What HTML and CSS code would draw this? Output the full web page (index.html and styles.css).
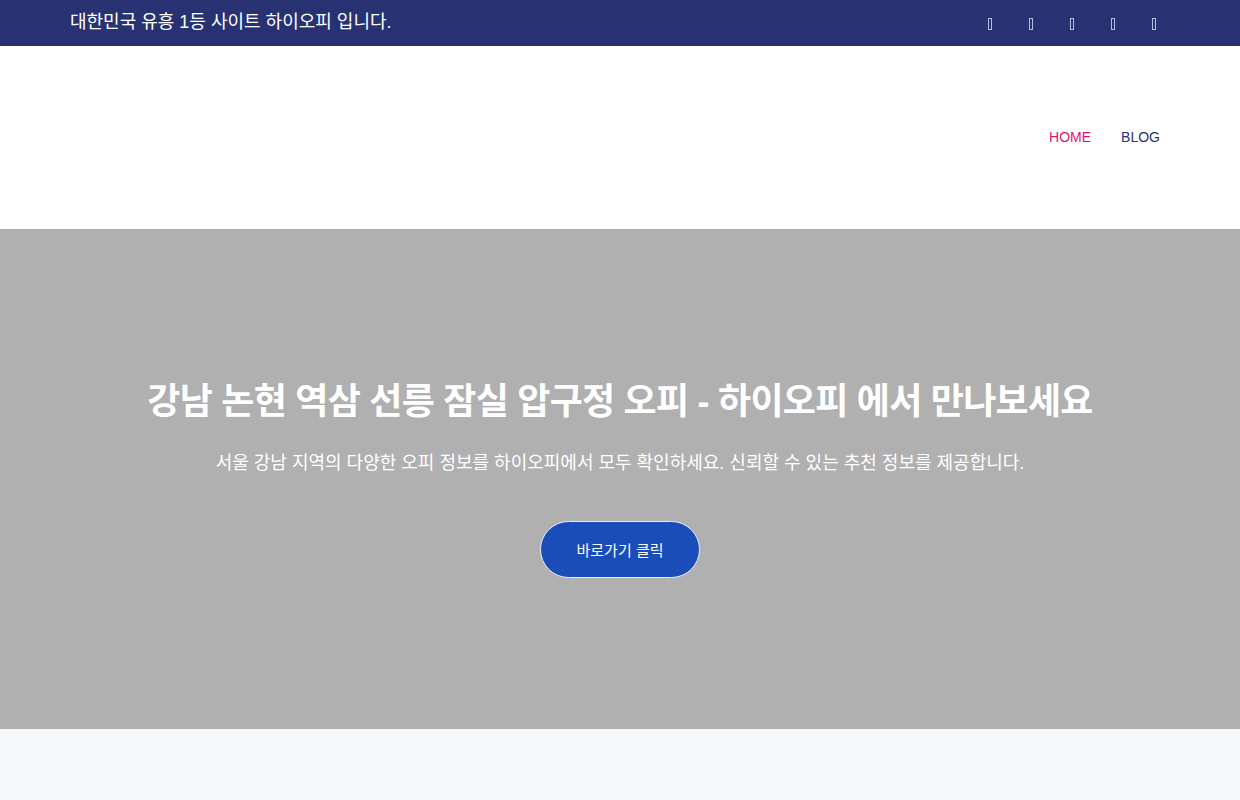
FILE: index.html
```html
<!DOCTYPE html>
<html lang="ko">
<head>
<meta charset="utf-8">
<title>하이오피</title>
<link rel="stylesheet" href="styles.css">
</head>
<body>
<div class="topbar">
  <div class="container topbar-inner">
    <p class="tagline">대한민국 유흥 1등 사이트 하이오피 입니다.</p>
    <ul class="social">
      <li><span class="tofu"></span></li>
      <li><span class="tofu"></span></li>
      <li><span class="tofu"></span></li>
      <li><span class="tofu"></span></li>
      <li><span class="tofu"></span></li>
    </ul>
  </div>
</div>
<header class="header">
  <div class="container header-inner">
    <nav class="nav">
      <a class="nav-link active" href="#">HOME</a>
      <a class="nav-link" href="#">BLOG</a>
    </nav>
  </div>
</header>
<section class="hero">
  <h1 class="hero-title">강남 논현 역삼 선릉 잠실 압구정 오피 - 하이오피 에서 만나보세요</h1>
  <p class="hero-sub">서울 강남 지역의 다양한 오피 정보를 하이오피에서 모두 확인하세요. 신뢰할 수 있는 추천 정보를 제공합니다.</p>
  <a class="hero-btn" href="#">바로가기 클릭</a>
</section>
<section class="after"></section>
</body>
</html>
```
FILE: styles.css
```css
* { box-sizing: border-box; }
html, body { margin: 0; padding: 0; }
body {
  font-family: "Liberation Sans", "Noto Sans CJK KR", sans-serif;
  background: #f6f8fa;
}
.container {
  width: 1100px;
  margin: 0 auto;
}
.topbar {
  background: #283272;
  height: 46px;
}
.topbar-inner {
  display: flex;
  justify-content: space-between;
  align-items: center;
  height: 46px;
}
.tagline {
  margin: 0;
  color: #ffffff;
  font-size: 18px;
  line-height: 24px;
  position: relative;
  top: -1px;
}
.social {
  list-style: none;
  margin: 0;
  padding: 0 14px 0 0;
  display: flex;
  gap: 37px;
}
.social li {
  display: flex;
  align-items: center;
}
.tofu {
  display: block;
  width: 4px;
  height: 12px;
  border: 1px solid #b6bde4;
  position: relative;
  top: 1px;
}
.header {
  background: #ffffff;
  height: 183px;
}
.header-inner {
  height: 183px;
  display: flex;
  justify-content: flex-end;
  align-items: center;
}
.nav {
  display: flex;
  gap: 30px;
  padding-right: 10px;
  position: relative;
  top: -1px;
}
.nav-link {
  font-size: 14px;
  color: #283272;
  text-decoration: none;
  line-height: 20px;
}
.nav-link.active { color: #e5106e; }
.hero {
  background: #b0b0b0;
  height: 500px;
  display: flex;
  flex-direction: column;
  align-items: center;
  justify-content: center;
}
.hero-title {
  margin: 0;
  color: #ffffff;
  font-size: 36px;
  font-weight: bold;
  line-height: 44px;
  letter-spacing: -0.75px;
}
.hero-sub {
  margin: 27px 0 0;
  color: #ffffff;
  font-size: 18px;
  line-height: 24px;
}
.hero-btn {
  margin-top: 46px;
  width: 160px;
  height: 57px;
  border: 1px solid #e8ecff;
  border-radius: 29px;
  background: #1a4db8;
  color: #ffffff;
  text-decoration: none;
  font-size: 15px;
  display: flex;
  align-items: center;
  justify-content: center;
}
.after {
  height: 80px;
  background: #f6f8fa;
}
```
